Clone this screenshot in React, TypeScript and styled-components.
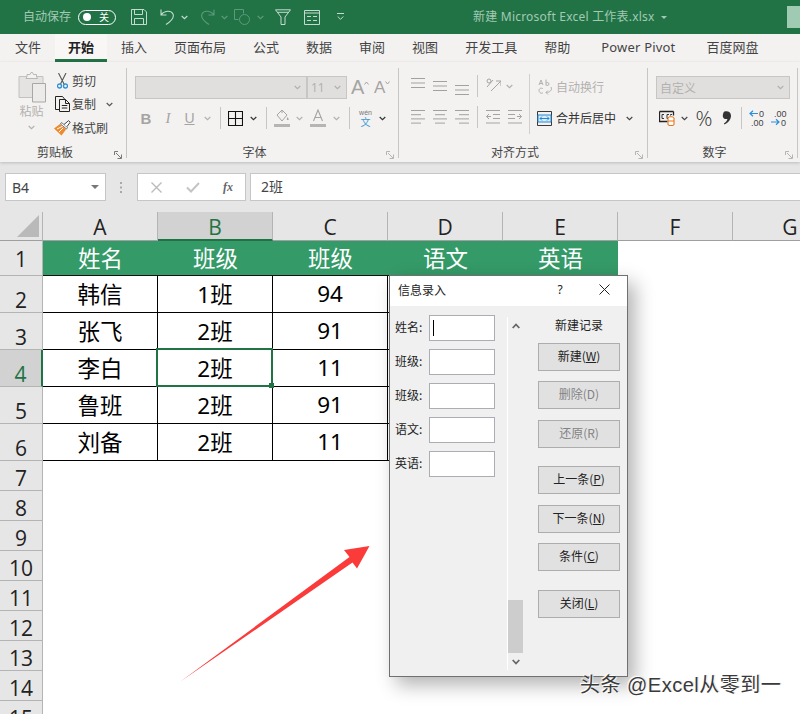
import React from "react";
import styled, { createGlobalStyle } from "styled-components";

const CJK = `"Noto Sans CJK SC", "Noto Sans", sans-serif`;
const LATIN = `"Noto Sans", "Noto Sans CJK SC", sans-serif`;

const Global = createGlobalStyle`
  html, body { margin: 0; padding: 0; background: #fff; overflow: hidden; }
  * { box-sizing: border-box; }
  body { font-family: ${LATIN}; }
`;

const Page = styled.div`
  position: relative; width: 800px; height: 714px; overflow: hidden;
  display: flex; flex-direction: column; background: #fff;
`;

/* ---------- title bar ---------- */
const TitleBar = styled.header`
  height: 34px; flex: none; background: #217346; display: flex; align-items: center; padding-left: 23px;
`;
const AutoSave = styled.span`
  width: 48px; font-size: 12px; line-height: 16px; color: #a3c9b4; white-space: nowrap;
`;
const Toggle = styled.span`
  margin-left: 7px; width: 38px; height: 15px; border: 1px solid #fff; border-radius: 8px;
  display: flex; align-items: center; justify-content: space-between; padding: 0 6px 0 4px;
  color: #fff; font-size: 10px; line-height: 13px;
`;
const Knob = styled.i` width: 8px; height: 8px; border-radius: 50%; background: #fff; `;
const QatSlot = styled.span<{ $ml: number }>`
  margin-left: ${(p) => p.$ml}px; display: flex; align-items: center; flex: none;
`;
const DocTitle = styled.span`
  margin-left: 129px; font-size: 12px; line-height: 16px; color: #a3c9b4; white-space: nowrap; letter-spacing: 0.22px;
`;
const TitleCaret = styled.i`
  margin-left: 6px; width: 0; height: 0; border: 3px solid transparent; border-top: 3px solid #a3c9b4; margin-top: 4px;
`;
const Avatar = styled.i` margin-left: auto; width: 13px; height: 22px; background: #9ecbb1; `;

/* ---------- tabs ---------- */
const TabBar = styled.nav`
  height: 28px; flex: none; background: #f3f2f1; display: flex; gap: 1px; padding-left: 2px;
`;
const Tab = styled.span<{ $active?: boolean; $pad?: number; $track?: number }>`
  padding: 0 ${(p) => p.$pad ?? 13}px 3px; height: 28px; line-height: 27px; font-size: 13px; white-space: nowrap;
  letter-spacing: ${(p) => p.$track ?? 0}px;
  color: ${(p) => (p.$active ? "#222" : "#444")}; font-weight: ${(p) => (p.$active ? 700 : 400)};
  background: ${(p) => (p.$active ? "#f8f7f6" : "transparent")};
  border-bottom: 3px solid ${(p) => (p.$active ? "#217346" : "transparent")};
`;

/* ---------- ribbon ---------- */
const Ribbon = styled.section`
  height: 100px; flex: none; background: #f3f2f1; display: flex; align-items: flex-start;
  box-shadow: 0 1px 3px rgba(0,0,0,.18); position: relative; z-index: 1;
`;
const Group = styled.div<{ $w: number }>`
  position: relative; width: ${(p) => p.$w}px; height: 90px; margin-top: 6px; flex: none;
  display: flex; flex-direction: column; border-right: 1px solid #c8c6c4;
`;
const GroupBody = styled.div` flex: 1; display: flex; min-height: 0; `;
const GroupLabel = styled.div`
  height: 18px; margin-bottom: -4px; padding-right: 16px; text-align: center; font-size: 12px; line-height: 18px; color: #444; flex: none;
`;
const Launcher = styled.span` position: absolute; right: 4px; bottom: -1px; display: flex; `;
const PasteCol = styled.div`
  margin-left: 18px; width: 27px; padding-top: 4px; display: flex; flex-direction: column; align-items: center;
`;
const PasteText = styled.span` font-size: 12px; line-height: 16px; margin-top: 1px; color: #b3b1af; white-space: nowrap; `;
const ChevronWrap = styled.span` margin-top: 5px; display: flex; `;
const ClipCol = styled.div` margin-left: 8px; padding-top: 1px; display: flex; flex-direction: column; `;
const ClipRow = styled.div` height: 23.5px; display: flex; align-items: center; font-size: 12px; color: #444; white-space: nowrap; `;
const ClipIcon = styled.span` width: 19px; display: flex; justify-content: center; flex: none; `;
const ClipChevron = styled.span` margin-left: 10px; display: flex; `;

const Stack = styled.div<{ $pl: number; $w?: number }>`
  padding-left: ${(p) => p.$pl}px; ${(p) => (p.$w ? `width:${p.$w}px;` : "")} display: flex; flex-direction: column; flex: none;
`;
const TopRow = styled.div` height: 23px; margin-top: 8px; display: flex; align-items: center; `;
const BottomRow = styled.div` height: 24px; margin-top: 7px; display: flex; align-items: center; `;
const Combo = styled.div<{ $w: number; $text?: boolean }>`
  width: ${(p) => p.$w}px; height: 23px; background: #e1dfdd; border: 1px solid #c8c6c4; flex: none;
  display: flex; align-items: center; justify-content: space-between; padding: 0 5px 0 3px;
  font-size: 12px; color: #b3b1af;
`;
const GrowA = styled.span<{ $size: number; $ml: number }>`
  margin-left: ${(p) => p.$ml}px; display: flex; align-items: flex-start; font-family: "Liberation Sans", sans-serif;
  font-size: ${(p) => p.$size}px; line-height: 23px; color: #a6a4a2; width: 15px;
`;
const GrowMark = styled.span` display: flex; margin-top: 5px; `;
const Cell = styled.span<{ $w: number }>`
  width: ${(p) => p.$w}px; height: 24px; flex: none; display: flex; align-items: center; justify-content: center;
`;
const Sep = styled.i` width: 1px; height: 22px; background: #c8c6c4; `;
const Bold = styled.b` font-family: "Liberation Sans", sans-serif; font-size: 15px; color: #a6a4a2; `;
const Italic = styled.i` font-family: "Liberation Serif", serif; font-size: 15px; color: #a6a4a2; `;
const Under = styled.u` font-family: "Liberation Sans", sans-serif; font-size: 14px; color: #a6a4a2; `;
const Wen = styled.span` display: flex; flex-direction: column; align-items: center; line-height: 1; `;
const WenTop = styled.span` font-size: 7px; line-height: 8px; color: #777; font-family: "Liberation Sans", sans-serif; `;
const WenBottom = styled.span` font-size: 10px; line-height: 11px; color: #3f9ad6; `;
const AlignLeft = styled.div` width: 131px; flex: none; padding-left: 8px; display: flex; flex-direction: column; border-right: 1px solid #d2d0ce; height: 60px; margin-top: 6px; `;
const AlignRow = styled.div<{ $mt: number }>` height: 24px; margin-top: ${(p) => p.$mt}px; display: flex; align-items: center; `;
const AlignRight = styled.div` display: flex; flex-direction: column; padding-left: 7px; margin-top: 7px; `;
const WrapBtn = styled.div<{ $off?: boolean; $mt: number }>`
  height: 24px; margin-top: ${(p) => p.$mt}px; display: flex; align-items: center; gap: 4px; font-size: 12px; white-space: nowrap;
  color: ${(p) => (p.$off ? "#b3b1af" : "#333")};
`;
const WrapIcon = styled.span` width: 15px; display: flex; justify-content: center; `;
const MergeChevron = styled.span` margin-left: 6px; display: flex; `;
const Percent = styled.span` font-family: "Open Sans", sans-serif; font-weight: 300; font-size: 21px; line-height: 24px; color: #333; `;

/* ---------- formula bar ---------- */
const FormulaBar = styled.section`
  height: 50px; flex: none; background: #e6e6e6; display: flex; align-items: center; padding-left: 5px;
`;
const NameBox = styled.div`
  width: 101px; height: 28px; background: #fff; border: 1px solid #c6c6c6; display: flex; align-items: center; justify-content: space-between;
  padding: 0 6px 0 6px; font-size: 14px; color: #444; flex: none;
`;
const NameCaret = styled.i` width: 0; height: 0; border: 4px solid transparent; border-top: 4px solid #777; border-bottom: 0; margin-right: 0; `;
const Grip = styled.span` width: 31px; display: flex; justify-content: center; flex: none; `;
const FxBox = styled.div`
  width: 109px; height: 28px; background: #fff; border: 1px solid #c6c6c6; display: flex; align-items: center; flex: none; position: relative;
`;
const FxSlot = styled.span<{ $w: number }>` width: ${(p) => p.$w}px; display: flex; justify-content: center; flex: none; `;
const FxText = styled.span` font-family: "Liberation Serif", serif; font-style: italic; font-weight: 700; font-size: 12px; color: #666; `;
const FormulaInput = styled.div`
  margin-left: 4px; flex: 1; height: 28px; background: #fff; border: 1px solid #c6c6c6; border-right: 0; padding-left: 10px;
  font-size: 14px; line-height: 25px; color: #444;
`;

/* ---------- sheet ---------- */
const Sheet = styled.main`
  flex: 1; min-height: 0; overflow: hidden; display: grid; background: #fff;
  grid-template-columns: 43px repeat(7, 115px);
  grid-template-rows: 29px 35px repeat(5, 37px) repeat(9, 30px);
`;
const Corner = styled.div`
  background: #e6e6e6; border-right: 1px solid #b4b4b4; border-bottom: 1px solid #9f9f9f; display: flex; align-items: flex-end; justify-content: flex-end; padding: 0 3px 3px 0;
`;
const ColHead = styled.div<{ $sel?: boolean }>`
  background: ${(p) => (p.$sel ? "#d2d2d2" : "#e6e6e6")}; color: ${(p) => (p.$sel ? "#217346" : "#222")};
  border-right: 1px solid #b4b4b4; border-bottom: ${(p) => (p.$sel ? "2px solid #217346" : "1px solid #9f9f9f")};
  display: flex; align-items: center; justify-content: center; font-family: "Open Sans", sans-serif; font-size: 21px; padding-top: 2px;
`;
const RowHead = styled.div<{ $sel?: boolean; $pb: number }>`
  background: ${(p) => (p.$sel ? "#d2d2d2" : "#e6e6e6")}; color: ${(p) => (p.$sel ? "#217346" : "#222")};
  border-right: ${(p) => (p.$sel ? "2px solid #217346" : "1px solid #b4b4b4")}; border-bottom: 1px solid #b4b4b4;
  display: flex; align-items: flex-end; justify-content: center; font-family: "Open Sans", sans-serif; font-size: 21px; line-height: 24px;
  padding-bottom: ${(p) => p.$pb}px;
`;
const HeaderCell = styled.div`
  background: #349a67; color: #fff; border-bottom: 1px solid #111; display: flex; align-items: center; justify-content: center;
  font-family: ${CJK}; font-size: 22.5px; padding-bottom: 3px;
`;
const DataCell = styled.div<{ $active?: boolean }>`
  position: relative; background: #fff; color: #000; border-right: 1px solid #000; border-bottom: 1px solid #000;
  display: flex; align-items: center; justify-content: center; font-family: ${LATIN}; font-size: 22.5px; padding-bottom: 2px;
  ${(p) => p.$active ? `
  z-index: 2;
  &::before { content: ""; position: absolute; left: -2px; top: -2px; right: -1px; bottom: -1px; border: 2px solid #217346; }
  &::after { content: ""; position: absolute; right: -2px; bottom: -2px; width: 5px; height: 5px; background: #217346; }
  ` : ""}
`;
const Blank = styled.div` background: #fff; `;

/* ---------- dialog ---------- */
const Dialog = styled.aside`
  position: absolute; left: 389px; top: 275px; width: 239px; height: 402px; z-index: 3;
  background: #f0f0f0; border: 1px solid #707070; box-shadow: 7px 8px 18px rgba(0,0,0,.3);
  display: flex; flex-direction: column;
`;
const DialogTitle = styled.div`
  height: 30px; flex: none; background: #fff; display: flex; align-items: center; padding: 0 0 4px 8px; font-family: ${CJK}; font-size: 12px; color: #222;
`;
const Help = styled.span` margin-left: 109px; width: 10px; text-align: center; font-family: "Noto Sans", sans-serif; color: #222; font-size: 12px; `;
const CloseX = styled.span` margin-left: 34px; display: flex; `;
const DialogBody = styled.div` flex: 1; display: flex; min-height: 0; `;
const Form = styled.div` width: 105px; margin-left: 5px; padding-top: 9px; display: flex; flex-direction: column; gap: 8px; flex: none; `;
const Field = styled.label` display: flex; align-items: center; height: 26px; font-family: ${CJK}; font-size: 12px; color: #222; `;
const FieldLabel = styled.span` width: 34px; flex: none; white-space: nowrap; padding-bottom: 3px; `;
const FieldInput = styled.span`
  position: relative; width: 66px; height: 26px; flex: none; background: #fff; border: 1px solid #abadb3; display: flex; align-items: center; padding-left: 3px;
`;
const Caret = styled.i` width: 1px; height: 16px; background: #000; `;
const Scroll = styled.div`
  margin-left: 7px; margin-top: 11px; width: 16px; height: 353px; flex: none; border-left: 1px solid #fff; display: flex; flex-direction: column; align-items: center;
`;
const ScrollUp = styled.span` margin-top: 6px; display: flex; `;
const Thumb = styled.i` margin-top: auto; width: 15px; height: 53px; background: #cdcdcd; align-self: flex-start; `;
const ScrollDown = styled.span` height: 17px; display: flex; align-items: center; `;
const Actions = styled.div` margin-left: 15px; width: 82px; display: flex; flex-direction: column; flex: none; padding-top: 10px; `;
const ActionsTitle = styled.div` height: 18px; line-height: 18px; text-align: center; font-family: ${CJK}; font-size: 12px; color: #222; margin-bottom: 9px; `;
const Button = styled.button<{ $mt?: number; $off?: boolean }>`
  margin: ${(p) => p.$mt ?? 0}px 0 0; width: 82px; height: 28px; padding: 0 0 2px; flex: none; border: 1px solid #adadad; background: #e1e1e1;
  font-family: ${CJK}; font-size: 12px; line-height: 16px; color: ${(p) => (p.$off ? "#838383" : "#222")};
`;

/* ---------- overlays ---------- */
const ArrowMark = styled.svg` position: absolute; left: 178px; top: 543px; z-index: 2; `;
const Watermark = styled.div`
  position: absolute; left: 580px; top: 673px; z-index: 4; font-family: "Liberation Sans", "Noto Sans CJK SC", sans-serif; font-size: 20px; line-height: 24px; letter-spacing: 0.5px;
  color: #3a3a3a; white-space: nowrap; text-shadow: 0 0 2px #fff, 1px 1px 1px #fff, -1px -1px 1px #fff, 1px 0 1px rgba(0,0,0,.25);
`;

/* ---------- icons ---------- */
const BRIGHT = "#c4dccf";
const DIM = "#5c9a7a";
const Chev = ({ c = "#555", w = 7 }: { c?: string; w?: number }) => (
  <svg width={w} height="5" viewBox="0 0 7 5"><path d="M.7 1l2.8 2.6L6.3 1" fill="none" stroke={c} strokeWidth="1.2" /></svg>
);
const SaveIcon = () => (
  <svg width="16" height="16" viewBox="0 0 16 16" fill="none" stroke={BRIGHT}><path d="M.5.5h12.5l2.500 2.500v12.500H.5zM3.500.5v5h8v-5M3.500 15.500v-6h9v6" /></svg>
);
const UndoIcon = ({ c, flip }: { c: string; flip?: boolean }) => (
  <svg width="15" height="16" viewBox="0 0 15 16" fill="none" stroke={c} strokeWidth="1.100" style={flip ? { transform: "scaleX(-1)" } : undefined}>
    <path d="M1 .5v5.500h5.500M1 6C4 1.500 11 1 13 5c1.500 3.500-2.500 7.500-7 10.500" />
  </svg>
);
const ShapeIcon = () => (
  <svg width="16" height="16" viewBox="0 0 16 16" fill="none" stroke={DIM}><path d="M9.500 4.500V.5h-9v10h4" /><circle cx="10.500" cy="10.500" r="5" /></svg>
);
const FilterIcon = () => (
  <svg width="16" height="16" viewBox="0 0 16 16" fill="none" stroke={BRIGHT}><path d="M.5.8h15L10 8v7.500H6V8zM2.500 3.300h11" /></svg>
);
const FormIcon = () => (
  <svg width="16" height="15" viewBox="0 0 16 15" fill="none" stroke={BRIGHT}><path d="M.5.5h15v14H.5zM.5 3h15M3 6.500h4M9 6.500h4M3 10.500h4M9 10.500h4" /></svg>
);
const MoreIcon = () => (
  <svg width="7" height="8" viewBox="0 0 7 8" fill="none" stroke={BRIGHT}><path d="M0 .5h7M.7 3.500L3.500 6.300 6.300 3.500" /></svg>
);
const PasteIcon = () => (
  <svg width="28" height="31" viewBox="0 0 28 31" fill="none">
    <path d="M1 4.500h24v21H1z" fill="#e4e3e2" stroke="#c4c2c0" />
    <path d="M9 4.500V2.500h3l1-2 1.500 0 1 2h3v2l1 2H8z" fill="#f3f2f1" stroke="#b9b7b5" />
    <path d="M14.500 11.500h13v18.500h-13z" fill="#ecebea" stroke="#a9a7a5" />
  </svg>
);
const ScissorsIcon = () => (
  <svg width="11" height="16" viewBox="0 0 11 16" fill="none">
    <path d="M1.500 0l5.500 11M9 0L3.500 11" stroke="#555" strokeWidth="1.100" />
    <circle cx="2.500" cy="13" r="2" stroke="#2e8fd6" strokeWidth="1.300" />
    <circle cx="8.500" cy="13" r="2" stroke="#2e8fd6" strokeWidth="1.300" />
  </svg>
);
const CopyIcon = () => (
  <svg width="16" height="16" viewBox="0 0 16 16" fill="none" stroke="#222">
    <path d="M4.500 13.500H.5V.5h7l2 2.500" />
    <path d="M4.500 3.500h6l4 4v8h-10zM10.500 3.500v4h4M6.800 9.500h5.500M6.800 12h5.500" />
  </svg>
);
const BrushIcon = () => (
  <svg width="17" height="16" viewBox="0 0 17 16">
    <path d="M0 8.500L6 4l6 5.500-4.500 6z" fill="#ee8a2b" />
    <path d="M3 9l6-3M5 12l4-4" stroke="#fff" strokeWidth="1" />
    <path d="M6.500 4l6 5 1-1.500-6-5z" fill="#fff" stroke="#555" strokeWidth=".8" />
    <path d="M10 4.500L14.500.7l1.700 1.500-3.300 4.500" fill="#fff" stroke="#444" />
  </svg>
);
const GridIcon = () => (
  <svg width="15" height="15" viewBox="0 0 15 15" fill="none" stroke="#111" strokeWidth="1.100"><path d="M.5.5h14v14H.5zM7.500.5v14M.5 7.500h14" /></svg>
);
const BucketIcon = () => (
  <svg width="16" height="18" viewBox="0 0 16 18" fill="none">
    <path d="M3 6l5-5 5 5-5 6z" stroke="#a6a4a2" />
    <path d="M8 1v3" stroke="#a6a4a2" />
    <path d="M13.500 8c1 1.500 1.500 2 1 3h-1.500c-.5-1 0-1.500.5-3z" fill="#a6a4a2" />
    <path d="M0 15h16v3H0z" fill="#b7b5b3" />
  </svg>
);
const FontColorIcon = () => (
  <svg width="16" height="18" viewBox="0 0 16 18" fill="none">
    <path d="M3.500 12L8 1l4.500 11M5 8.500h6" stroke="#a6a4a2" strokeWidth="1.100" />
    <path d="M0 15h16v3H0z" fill="#b7b5b3" />
  </svg>
);
const Lines = ({ kind, top = 0, n = 4 }: { kind: "l" | "c" | "r"; top?: number; n?: number }) => {
  const rows = Array.from({ length: n }, (_, i) => i);
  return (
    <svg width="14" height="24" viewBox="0 0 14 24" stroke="#a3a1a0" fill="none">
      {rows.map((i) => {
        const short = n === 4 && i % 2 === 1;
        const w = short ? 10 : 14;
        const x = kind === "l" ? 0 : kind === "c" ? (14 - w) / 2 : 14 - w;
        return <path key={i} d={`M${x} ${top + i * (n === 4 ? 4.2 : 4.500) + 0.5}h${w}`} />;
      })}
    </svg>
  );
};
const OrientIcon = () => (
  <svg width="16" height="16" viewBox="0 0 16 16" fill="none" stroke="#a6a4a2"><path d="M2 9L8 2M6 13L16 3M11 3h5v5" /><circle cx="4" cy="3" r="2" /></svg>
);
const IndentIcon = ({ flip }: { flip?: boolean }) => (
  <svg width="14" height="14" viewBox="0 0 14 14" fill="none" stroke="#a6a4a2" style={flip ? { transform: "scaleX(-1)" } : undefined}>
    <path d="M0 .5h14M7 4.500h7M7 8.500h7M0 13h14M5 6.500H.5M3 4L.5 6.500 3 9" />
  </svg>
);
const WrapIconSvg = () => (
  <svg width="14" height="16" viewBox="0 0 14 16" fill="none" stroke="#b3b1af">
    <path d="M1 6l2-5 2 5M1.700 4.500h2.700M8 .5v6M8 4.200c1-1.200 3-.8 3 .8s-2 2-3 .8M5 10c-1-1.500-4-1-4 1.500S4 15 5 13.500M13 8c1.500 3-1 5.500-5 5.500M10 11.500l-2 2 2 2" />
  </svg>
);
const MergeIcon = () => (
  <svg width="15" height="15" viewBox="0 0 15 15" fill="none">
    <path d="M.5.5h14v14H.5z" stroke="#3a3a3a" />
    <path d="M1 4h13v7H1z" fill="#d9ecf9" stroke="#2288d6" />
    <path d="M3 7.500h9M5 5.500l-2 2 2 2M10 5.500l2 2-2 2" stroke="#2288d6" />
  </svg>
);
const CurrencyIcon = () => (
  <svg width="16" height="16" viewBox="0 0 16 16" fill="none">
    <path d="M.5 1.500h14M.5 1.500v10h8M14.500 1.500v4" stroke="#222" strokeWidth="1.300" />
    <path d="M5 4.500H3v4h2M10 4.500H8v4h1M13 4.500h-1.500v1" stroke="#333" />
    <ellipse cx="12" cy="8" rx="3" ry="1.300" fill="#fff" stroke="#e5761a" />
    <path d="M9 8v6.500c1 1.500 5 1.500 6 0V8M9 11h6" stroke="#e5761a" strokeWidth="1.100" fill="#fff" />
  </svg>
);
const CommaIcon = () => (
  <svg width="10" height="14" viewBox="0 0 10 14"><path d="M2.500 .5c3-1 6.500.5 6.500 4 0 4-3 7.500-6.500 9l-.6-1c2-1.200 3.200-2.800 3.500-4.500C2.500 8.500.5 7 .8 4.500 1 2.700 1.500 1 2.500 .5z" fill="#333" /></svg>
);
const NumText = styled.text` font-family: "Liberation Sans", sans-serif; font-size: 9px; fill: #444; `;
const IncIcon = () => (
  <svg width="16" height="16" viewBox="0 0 16 16">
    <path d="M9 3.500H1M4 .8L1 3.500l3 2.800" fill="none" stroke="#2b8fdc" strokeWidth="1.200" />
    <NumText x="10" y="7">0</NumText>
    <NumText x="2" y="15.500">.00</NumText>
  </svg>
);
const DecIcon = () => (
  <svg width="16" height="16" viewBox="0 0 16 16">
    <NumText x="3" y="7">.00</NumText>
    <path d="M0 12h8M5 9.300L8 12l-3 2.800" fill="none" stroke="#2b8fdc" strokeWidth="1.200" />
    <NumText x="10" y="15.500">0</NumText>
  </svg>
);
const LauncherIcon = ({ c = "#777" }: { c?: string }) => (
  <svg width="8" height="8" viewBox="0 0 8 8" fill="none" stroke={c}><path d="M.5 4V.5H4M2 2l5 5M7.500 3.500v4h-4" /></svg>
);
const CancelIcon = () => (
  <svg width="11" height="11" viewBox="0 0 11 11" stroke="#bbb" strokeWidth="1.400"><path d="M.5.5l10 10M10.500.5l-10 10" /></svg>
);
const CheckIcon = () => (
  <svg width="14" height="11" viewBox="0 0 14 11" fill="none" stroke="#c4c4c4" strokeWidth="2"><path d="M1 5.500l4 4L13 1" /></svg>
);
const GripIcon = () => (
  <svg width="3" height="11" viewBox="0 0 3 11" fill="#a9a9a9"><rect y="0" width="2" height="2" /><rect y="4.500" width="2" height="2" /><rect y="9" width="2" height="2" /></svg>
);
const CornerIcon = () => (
  <svg width="22" height="22" viewBox="0 0 22 22"><path d="M22 0v22H0z" fill="#b9b9b9" /></svg>
);
const CloseIcon = () => (
  <svg width="11" height="11" viewBox="0 0 11 11" stroke="#222"><path d="M.5.5l10 10M10.500.5l-10 10" /></svg>
);
const ScrollChev = ({ up }: { up?: boolean }) => (
  <svg width="8" height="6" viewBox="0 0 8 6" fill="none" stroke="#666" strokeWidth="1.800">
    <path d={up ? "M.7 5L4 1.500 7.300 5" : "M.7 1L4 4.500 7.300 1"} />
  </svg>
);

/* ---------- data ---------- */
const tabs = ["文件", "开始", "插入", "页面布局", "公式", "数据", "审阅", "视图", "开发工具", "帮助"];
const cols = ["A", "B", "C", "D", "E", "F", "G"];
const rows = [
  { n: 2, a: "韩信", b: "1班", c: "94" },
  { n: 3, a: "张飞", b: "2班", c: "91" },
  { n: 4, a: "李白", b: "2班", c: "11" },
  { n: 5, a: "鲁班", b: "2班", c: "91" },
  { n: 6, a: "刘备", b: "2班", c: "11" },
];
const emptyRows = [7, 8, 9, 10, 11, 12, 13, 14, 15];
const fields = ["姓名", "班级", "班级", "语文", "英语"];

export default function App() {
  return (
    <Page>
      <Global />
      <TitleBar>
        <AutoSave>自动保存</AutoSave>
        <Toggle><Knob />关</Toggle>
        <QatSlot $ml={15}><SaveIcon /></QatSlot>
        <QatSlot $ml={13}><UndoIcon c={BRIGHT} /></QatSlot>
        <QatSlot $ml={6}><Chev c={BRIGHT} /></QatSlot>
        <QatSlot $ml={12}><UndoIcon c={DIM} flip /></QatSlot>
        <QatSlot $ml={6}><Chev c={DIM} /></QatSlot>
        <QatSlot $ml={6}><ShapeIcon /></QatSlot>
        <QatSlot $ml={7}><Chev c={DIM} /></QatSlot>
        <QatSlot $ml={11}><FilterIcon /></QatSlot>
        <QatSlot $ml={13}><FormIcon /></QatSlot>
        <QatSlot $ml={17}><MoreIcon /></QatSlot>
        <DocTitle>新建 Microsoft Excel 工作表.xlsx</DocTitle>
        <TitleCaret />
        <Avatar />
      </TitleBar>

      <TabBar>
        {tabs.map((t) => <Tab key={t} $active={t === "开始"}>{t}</Tab>)}
        <Tab $pad={17} $track={0.2}>Power Pivot</Tab>
        <Tab>百度网盘</Tab>
      </TabBar>

      <Ribbon>
        <Group $w={127}>
          <GroupBody>
            <PasteCol>
              <PasteIcon />
              <PasteText>粘贴</PasteText>
              <ChevronWrap><Chev c="#b3b1af" /></ChevronWrap>
            </PasteCol>
            <ClipCol>
              <ClipRow><ClipIcon><ScissorsIcon /></ClipIcon>剪切</ClipRow>
              <ClipRow><ClipIcon><CopyIcon /></ClipIcon>复制<ClipChevron><Chev /></ClipChevron></ClipRow>
              <ClipRow><ClipIcon><BrushIcon /></ClipIcon>格式刷</ClipRow>
            </ClipCol>
          </GroupBody>
          <GroupLabel>剪贴板</GroupLabel>
          <Launcher><LauncherIcon /></Launcher>
        </Group>

        <Group $w={272}>
          <GroupBody>
            <Stack $pl={8}>
              <TopRow>
                <Combo $w={172}><span /><Chev c="#b3b1af" /></Combo>
                <Combo $w={40}>11<Chev c="#b3b1af" /></Combo>
                <GrowA $size={20} $ml={4}>A<GrowMark><svg width="5" height="4" viewBox="0 0 5 4" fill="none" stroke="#a6a4a2"><path d="M.5 3.500L2.500 1l2 2.500" /></svg></GrowMark></GrowA>
                <GrowA $size={17} $ml={8}>A<GrowMark><svg width="5" height="4" viewBox="0 0 5 4" fill="none" stroke="#a6a4a2"><path d="M.5.5l2 2.500 2-2.500" /></svg></GrowMark></GrowA>
              </TopRow>
              <BottomRow>
                <Cell $w={22}><Bold>B</Bold></Cell>
                <Cell $w={22}><Italic>I</Italic></Cell>
                <Cell $w={21}><Under>U</Under></Cell>
                <Cell $w={14}><Chev c="#b3b1af" /></Cell>
                <Cell $w={12}><Sep /></Cell>
                <Cell $w={19}><GridIcon /></Cell>
                <Cell $w={16}><Chev c="#333" /></Cell>
                <Cell $w={10}><Sep /></Cell>
                <Cell $w={22}><BucketIcon /></Cell>
                <Cell $w={12}><Chev c="#b3b1af" /></Cell>
                <Cell $w={25}><FontColorIcon /></Cell>
                <Cell $w={12}><Chev c="#b3b1af" /></Cell>
                <Cell $w={14}><Sep /></Cell>
                <Cell $w={19}><Wen><WenTop>wén</WenTop><WenBottom>文</WenBottom></Wen></Cell>
                <Cell $w={14}><Chev c="#333" /></Cell>
              </BottomRow>
            </Stack>
          </GroupBody>
          <GroupLabel>字体</GroupLabel>
          <Launcher><LauncherIcon c="#b5b5b5" /></Launcher>
        </Group>

        <Group $w={249}>
          <GroupBody>
            <AlignLeft>
              <AlignRow $mt={0}>
                <Cell $w={22}><Lines kind="c" n={3} top={4} /></Cell>
                <Cell $w={22}><Lines kind="c" n={3} top={7} /></Cell>
                <Cell $w={22}><Lines kind="c" n={3} top={11} /></Cell>
                <Cell $w={8}><Sep /></Cell>
                <Cell $w={23}><OrientIcon /></Cell>
                <Cell $w={11}><Chev c="#b3b1af" /></Cell>
              </AlignRow>
              <AlignRow $mt={7}>
                <Cell $w={22}><Lines kind="l" top={5} /></Cell>
                <Cell $w={22}><Lines kind="c" top={5} /></Cell>
                <Cell $w={22}><Lines kind="r" top={5} /></Cell>
                <Cell $w={8}><Sep /></Cell>
                <Cell $w={24}><IndentIcon /></Cell>
                <Cell $w={20}><IndentIcon flip /></Cell>
              </AlignRow>
            </AlignLeft>
            <AlignRight>
              <WrapBtn $off $mt={0}><WrapIcon><WrapIconSvg /></WrapIcon>自动换行</WrapBtn>
              <WrapBtn $mt={7}><WrapIcon><MergeIcon /></WrapIcon>合并后居中<MergeChevron><Chev c="#444" /></MergeChevron></WrapBtn>
            </AlignRight>
          </GroupBody>
          <GroupLabel>对齐方式</GroupLabel>
          <Launcher><LauncherIcon c="#b5b5b5" /></Launcher>
        </Group>

        <Group $w={150}>
          <GroupBody>
            <Stack $pl={8}>
              <TopRow><Combo $w={134}>自定义<Chev c="#b3b1af" /></Combo></TopRow>
              <BottomRow>
                <Cell $w={21}><CurrencyIcon /></Cell>
                <Cell $w={14}><Chev c="#444" /></Cell>
                <Cell $w={26}><Percent>%</Percent></Cell>
                <Cell $w={20}><CommaIcon /></Cell>
                <Cell $w={8}><Sep /></Cell>
                <Cell $w={23}><IncIcon /></Cell>
                <Cell $w={21}><DecIcon /></Cell>
              </BottomRow>
            </Stack>
          </GroupBody>
          <GroupLabel>数字</GroupLabel>
          <Launcher><LauncherIcon c="#b5b5b5" /></Launcher>
        </Group>
      </Ribbon>

      <FormulaBar>
        <NameBox>B4<NameCaret /></NameBox>
        <Grip><GripIcon /></Grip>
        <FxBox>
          <FxSlot $w={37}><CancelIcon /></FxSlot>
          <FxSlot $w={36}><CheckIcon /></FxSlot>
          <FxSlot $w={34}><FxText>fx</FxText></FxSlot>
        </FxBox>
        <FormulaInput>2班</FormulaInput>
      </FormulaBar>

      <Sheet>
        <Corner><CornerIcon /></Corner>
        {cols.map((c) => <ColHead key={c} $sel={c === "B"}>{c}</ColHead>)}

        <RowHead $pb={4}>1</RowHead>
        <HeaderCell>姓名</HeaderCell>
        <HeaderCell>班级</HeaderCell>
        <HeaderCell>班级</HeaderCell>
        <HeaderCell>语文</HeaderCell>
        <HeaderCell>英语</HeaderCell>
        <Blank /><Blank />

        {rows.map((r) => (
          <React.Fragment key={r.n}>
            <RowHead $sel={r.n === 4} $pb={0}>{r.n}</RowHead>
            <DataCell>{r.a}</DataCell>
            <DataCell $active={r.n === 4}>{r.b}</DataCell>
            <DataCell>{r.c}</DataCell>
            <DataCell />
            <DataCell />
            <Blank /><Blank />
          </React.Fragment>
        ))}

        {emptyRows.map((n) => (
          <React.Fragment key={n}>
            <RowHead $pb={0}>{n}</RowHead>
            <Blank /><Blank /><Blank /><Blank /><Blank /><Blank /><Blank />
          </React.Fragment>
        ))}
      </Sheet>

      <ArrowMark width="194" height="142" viewBox="178 543 194 142">
        <path d="M180.500 681.500L349.500 557 344 550 369.500 546 357 568.500 352.500 562.500z" fill="#fb3a3a" />
      </ArrowMark>

      <Dialog>
        <DialogTitle>
          信息录入
          <Help>?</Help>
          <CloseX><CloseIcon /></CloseX>
        </DialogTitle>
        <DialogBody>
          <Form>
            {fields.map((f, i) => (
              <Field key={i}>
                <FieldLabel>{f}:</FieldLabel>
                <FieldInput>{i === 0 && <Caret />}</FieldInput>
              </Field>
            ))}
          </Form>
          <Scroll>
            <ScrollUp><ScrollChev up /></ScrollUp>
            <Thumb />
            <ScrollDown><ScrollChev /></ScrollDown>
          </Scroll>
          <Actions>
            <ActionsTitle>新建记录</ActionsTitle>
            <Button>新建(<u>W</u>)</Button>
            <Button $mt={10} $off>删除(D)</Button>
            <Button $mt={11} $off>还原(R)</Button>
            <Button $mt={18}>上一条(<u>P</u>)</Button>
            <Button $mt={11}>下一条(<u>N</u>)</Button>
            <Button $mt={10}>条件(<u>C</u>)</Button>
            <Button $mt={19}>关闭(<u>L</u>)</Button>
          </Actions>
        </DialogBody>
      </Dialog>

      <Watermark>头条 @Excel从零到一</Watermark>
    </Page>
  );
}
